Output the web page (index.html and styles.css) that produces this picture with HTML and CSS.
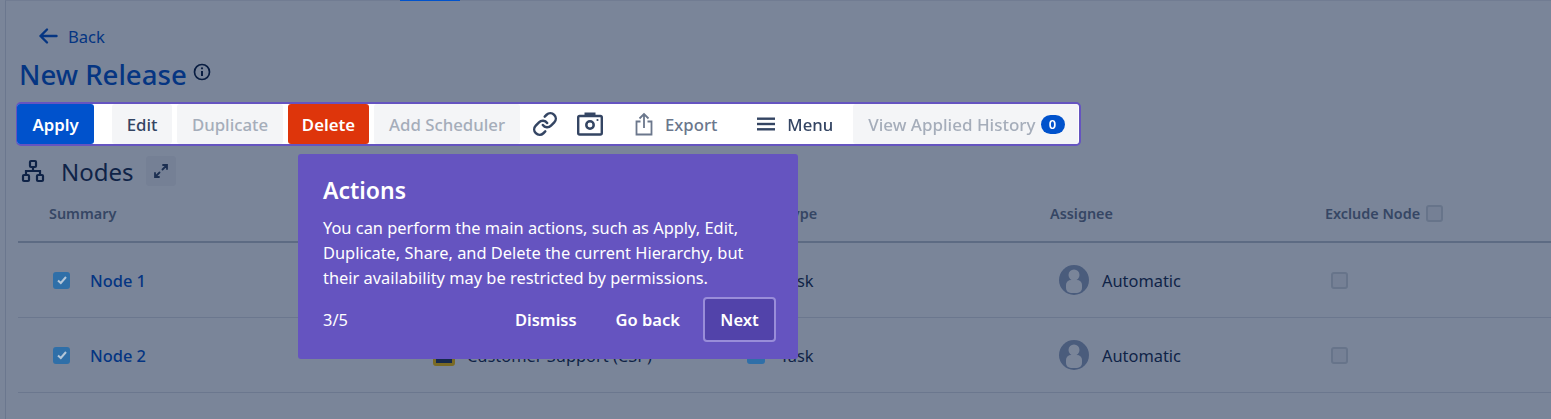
FILE: index.html
```html
<!doctype html>
<html lang="en">
    <head>
        <meta charset="UTF-8">
        <title>New Release</title>
        <link rel="stylesheet" href="styles.css">
    </head>
    <body>
        <div class="top-tab"></div>
        <main class="page">
            <a class="back">
                <svg width="20" height="20" viewBox="0 0 20 20" fill="none" stroke="currentColor" stroke-width="2.400" stroke-linecap="round" stroke-linejoin="round"><path d="M18.500 10H2.500M9 3.500L2.500 10 9 16.500"/></svg>
                Back
            </a>
            <div class="title-row">
                <h1>New Release</h1>
                <svg width="18" height="18" viewBox="0 0 18 18" fill="none" stroke="#091e42" stroke-width="1.700"><circle cx="9" cy="9" r="7.500"/><path d="M9 8v5" stroke-width="2"/><circle cx="9" cy="5.300" r="1.100" fill="#091e42" stroke="none"/></svg>
            </div>

            <div class="toolbar">
                <button class="btn btn-primary btn-apply">Apply</button>
                <button class="btn btn-edit">Edit</button>
                <button class="btn btn-off btn-duplicate">Duplicate</button>
                <button class="btn btn-danger">Delete</button>
                <button class="btn btn-off btn-scheduler">Add Scheduler</button>
                <span class="tool-icon tool-link">
                    <svg width="26" height="26" viewBox="0 0 24 24" fill="none" stroke="currentColor" stroke-width="2.300" stroke-linecap="round" stroke-linejoin="round"><path d="M10 13a5 5 0 0 0 7.540.540l3-3a5 5 0 0 0-7.070-7.070l-1.720 1.710"/><path d="M14 11a5 5 0 0 0-7.540-.540l-3 3a5 5 0 0 0 7.070 7.070l1.710-1.710"/></svg>
                </span>
                <span class="tool-icon tool-camera">
                    <svg width="26" height="24" viewBox="0 0 26 24" fill="none" stroke="currentColor" stroke-width="2.400"><rect x="1.200" y="4" width="23.600" height="18.500" rx="1.500"/><path d="M7.500 0.500h11V4h-11z" fill="currentColor" stroke="none"/><circle cx="13" cy="13" r="3.700" stroke-width="2.500"/><circle cx="20.500" cy="8" r="1.100" fill="currentColor" stroke="none"/></svg>
                </span>
                <span class="tool-text tool-export">
                    <svg width="18" height="24" viewBox="0 0 18 24" fill="none" stroke="currentColor" stroke-width="1.800"><path d="M5.500 9.500H1.500v13h15v-13h-4"/><path d="M9 16V2M4.500 6.500L9 2l4.500 4.500"/></svg>
                    Export
                </span>
                <span class="tool-text tool-menu">
                    <svg width="18" height="14" viewBox="0 0 18 14" fill="currentColor"><rect y="0.500" width="18" height="2.400"/><rect y="5.800" width="18" height="2.400"/><rect y="11.100" width="18" height="2.400"/></svg>
                    Menu
                </span>
                <button class="btn btn-off btn-history">View Applied History <span class="badge">0</span></button>
            </div>

            <div class="nodes-head">
                <svg width="24" height="24" viewBox="0 0 24 24" fill="none" stroke="currentColor" stroke-width="2.200"><rect x="9" y="2" width="6" height="6" rx="1"/><rect x="2" y="16" width="6" height="6" rx="1"/><rect x="16" y="16" width="6" height="6" rx="1"/><path d="M12 8v4M5 16v-4h14v4"/></svg>
                <h2>Nodes</h2>
                <span class="expand">
                    <svg width="14" height="14" viewBox="0 0 14 14" fill="none" stroke="currentColor" stroke-width="1.800" stroke-linecap="round"><path d="M8.500 5.500L13 1M9 1h4v4M5.500 8.500L1 13M1 9v4h4"/></svg>
                </span>
            </div>

            <div class="table">
                <div class="row row-head">
                    <div class="cell-summary">Summary</div>
                    <div class="cell-project">Project</div>
                    <div class="cell-type">Issue Type</div>
                    <div class="cell-assignee">Assignee</div>
                    <div class="cell-exclude">Exclude Node <span class="check"></span></div>
                </div>
                <div class="row">
                    <div class="cell-summary"><span class="check check-on"><svg width="12" height="12" viewBox="0 0 12 12" fill="none" stroke="#b4c6d8" stroke-width="2"><path d="M2 6.500l2.800 2.500L10 3"/></svg></span><a class="node-link">Node 1</a></div>
                    <div class="cell-project"><span class="project-icon"></span>Customer Support (CSP)</div>
                    <div class="cell-type"><span class="type-icon"></span>Task</div>
                    <div class="cell-assignee"><svg class="avatar" width="30" height="30" viewBox="0 0 30 30"><circle cx="15" cy="15" r="15" fill="#97a5c1"/><circle cx="15" cy="10" r="5.500" fill="#fff"/><rect x="7" y="15" width="16" height="13" rx="5" fill="#fff"/></svg>Automatic</div>
                    <div class="cell-exclude cell-exclude-box"><span class="check"></span></div>
                </div>
                <div class="row">
                    <div class="cell-summary"><span class="check check-on"><svg width="12" height="12" viewBox="0 0 12 12" fill="none" stroke="#b4c6d8" stroke-width="2"><path d="M2 6.500l2.800 2.500L10 3"/></svg></span><a class="node-link">Node 2</a></div>
                    <div class="cell-project"><span class="project-icon"></span>Customer Support (CSP)</div>
                    <div class="cell-type"><span class="type-icon"></span>Task</div>
                    <div class="cell-assignee"><svg class="avatar" width="30" height="30" viewBox="0 0 30 30"><circle cx="15" cy="15" r="15" fill="#97a5c1"/><circle cx="15" cy="10" r="5.500" fill="#fff"/><rect x="7" y="15" width="16" height="13" rx="5" fill="#fff"/></svg>Automatic</div>
                    <div class="cell-exclude cell-exclude-box"><span class="check"></span></div>
                </div>
            </div>
        </main>

        <div class="overlay"></div>

        <div class="tour">
            <h3>Actions</h3>
            <p>You can perform the main actions, such as Apply, Edit, Duplicate, Share, and Delete the current Hierarchy, but their availability may be restricted by permissions.</p>
            <div class="tour-foot">
                <span class="tour-count">3/5</span>
                <button class="tour-btn">Dismiss</button>
                <button class="tour-btn">Go back</button>
                <button class="tour-btn tour-next">Next</button>
            </div>
        </div>
    </body>
</html>
```

FILE: styles.css
```css
* {
    box-sizing: border-box;
}
html, body {
    height: 100%;
}
body {
    margin: 0;
    overflow: hidden;
    font-family: "Noto Sans", sans-serif;
    font-size: 16.400px;
    color: #172b4d;
    background-color: #fff;
}

.top-tab {
    position: absolute;
    top: 0;
    left: 400px;
    width: 60px;
    height: 1px;
    background-color: #0052cc;
    z-index: 20;
}

.page {
    height: 100%;
    margin-left: 5px;
    padding: 23px 0 0 12px;
    border-top: 1px solid #ebecf0;
    border-left: 1px solid #dfe1e6;
}

.back {
    display: flex;
    align-items: center;
    gap: 10px;
    height: 26px;
    margin-left: 20px;
    margin-top: -1px;
    color: #0052cc;
    font-size: 16.600px;
}

.title-row {
    display: flex;
    align-items: center;
    gap: 6px;
    height: 38px;
    margin-top: 6px;
    margin-left: 1px;
}
.title-row h1 {
    margin: 0;
    color: #0052cc;
    font-size: 27.600px;
    font-weight: 500;
}
.title-row svg {
    margin-top: -4px;
}

/* toolbar stays bright above the overlay */
.toolbar {
    position: relative;
    z-index: 10;
    display: flex;
    align-items: center;
    width: 1065px;
    height: 44px;
    margin: 9px 0 0 -2px;
    border: 2px solid #6554c0;
    border-left-width: 1px;
    border-radius: 5px;
    background-color: #fff;
}

.btn {
    height: 40px;
    padding: 0;
    border: 0;
    border-radius: 3px;
    font-family: inherit;
    font-size: 16.800px;
    font-weight: 500;
    background-color: #f4f5f7;
    color: #344563;
}
.btn-primary {
    background-color: #0052cc;
    color: #fff;
    font-weight: 600;
}
.btn-danger {
    width: 81px;
    margin-left: 5px;
    background-color: #de350b;
    color: #fff;
    font-weight: 600;
}
.btn-off {
    color: #a5adba;
}
.btn-apply { width: 77px; }
.btn-edit { width: 60px; margin-left: 18px; }
.btn-duplicate { width: 106px; margin-left: 5px; }
.btn-scheduler { width: 146px; margin-left: 5px; }

.tool-icon {
    display: flex;
    color: #344563;
}
.tool-link { margin-left: 12px; }
.tool-camera { margin-left: 19px; }

.tool-text {
    display: flex;
    align-items: center;
    gap: 12px;
    color: #344563;
    font-size: 16.700px;
    font-weight: 500;
}
.tool-export {
    margin-left: 32px;
    color: #6b778c;
}
.tool-menu {
    margin-left: 40px;
}
.btn-history {
    display: flex;
    align-items: center;
    gap: 5px;
    width: 225px;
    flex: none;
    margin-left: 20px;
    padding-left: 15px;
    font-size: 17px;
}
.badge {
    width: 24px;
    height: 19px;
    border-radius: 10px;
    background-color: #0052cc;
    color: #fff;
    font-size: 13px;
    font-weight: 600;
    line-height: 19px;
    text-align: center;
}

.nodes-head {
    display: flex;
    align-items: center;
    height: 30px;
    margin-top: 10px;
    margin-left: 3px;
}
.nodes-head h2 {
    margin: 0 12px 0 16px;
    font-size: 24px;
    font-weight: 400;
}
.expand {
    display: flex;
    align-items: center;
    justify-content: center;
    width: 30px;
    height: 30px;
    border-radius: 3px;
    background-color: #f4f5f7;
    color: #344563;
}

.table {
    margin-top: 14px;
}
.row {
    display: grid;
    grid-template-columns: 415px 310px 307px 275px 1fr;
    align-items: center;
    height: 75px;
    border-bottom: 1px solid #dfe1e6;
}
.row-head {
    height: 43px;
    padding-bottom: 15px;
    border-bottom: 2px solid #c1c7d0;
    color: #6b778c;
    font-size: 14.400px;
    font-weight: 600;
}

.cell-summary,
.cell-project,
.cell-type,
.cell-assignee,
.cell-exclude {
    display: flex;
    align-items: center;
}
.row .cell-summary { padding-left: 35px; }
.row-head .cell-summary { padding-left: 31px; }
.row-head .cell-exclude {
    gap: 6px;
}

.check {
    display: inline-flex;
    align-items: center;
    justify-content: center;
    width: 17px;
    height: 17px;
    border: 2px solid #d5d9de;
    border-radius: 3px;
    background-color: #f4f5f7;
}
/* tick box and task icon read brighter than the dim layer allows */
.check-on {
    position: relative;
    z-index: 6;
    border: 0;
    background-color: #2f6fa8;
}
.node-link {
    margin-left: 20px;
    color: #0052cc;
    font-weight: 500;
}

.project-icon {
    width: 22px;
    height: 22px;
    margin-right: 12px;
    border: 3px solid #ffc400;
    border-radius: 3px;
    background-color: #253858;
}
.type-icon {
    position: relative;
    z-index: 6;
    width: 18px;
    height: 18px;
    margin: 0 15px 0 4px;
    border-radius: 3px;
    background-color: #2f6fa8;
}
.avatar {
    margin: 0 13px 0 9px;
}
.cell-exclude-box {
    padding-left: 6px;
}

/* dim layer over the whole page */
.overlay {
    position: fixed;
    top: 0;
    left: 0;
    right: 0;
    bottom: 0;
    z-index: 5;
    background-color: rgba(9, 30, 66, 0.54);
}

.tour {
    position: absolute;
    top: 154px;
    left: 298px;
    z-index: 15;
    width: 500px;
    height: 205px;
    padding: 20px 22px 0 25px;
    border-radius: 3px;
    background-color: #6554c0;
    color: #fff;
}
.tour h3 {
    margin: 0;
    font-size: 23px;
    font-weight: 600;
    line-height: 32px;
}
.tour p {
    margin: 9px 0 0;
    padding-right: 20px;
    font-size: 16.400px;
    line-height: 25px;
}
.tour-foot {
    display: flex;
    align-items: center;
    margin-top: 7px;
}
.tour-count {
    margin-right: auto;
}
.tour-btn {
    height: 45px;
    padding: 0;
    margin-left: 39px;
    border: 0;
    background: none;
    color: #fff;
    font-family: inherit;
    font-size: 16.500px;
    font-weight: 600;
}
.tour-next {
    width: 73px;
    margin-left: 23px;
    border: 2px solid #998dd9;
    border-radius: 4px;
    background-color: #5243aa;
}
```
